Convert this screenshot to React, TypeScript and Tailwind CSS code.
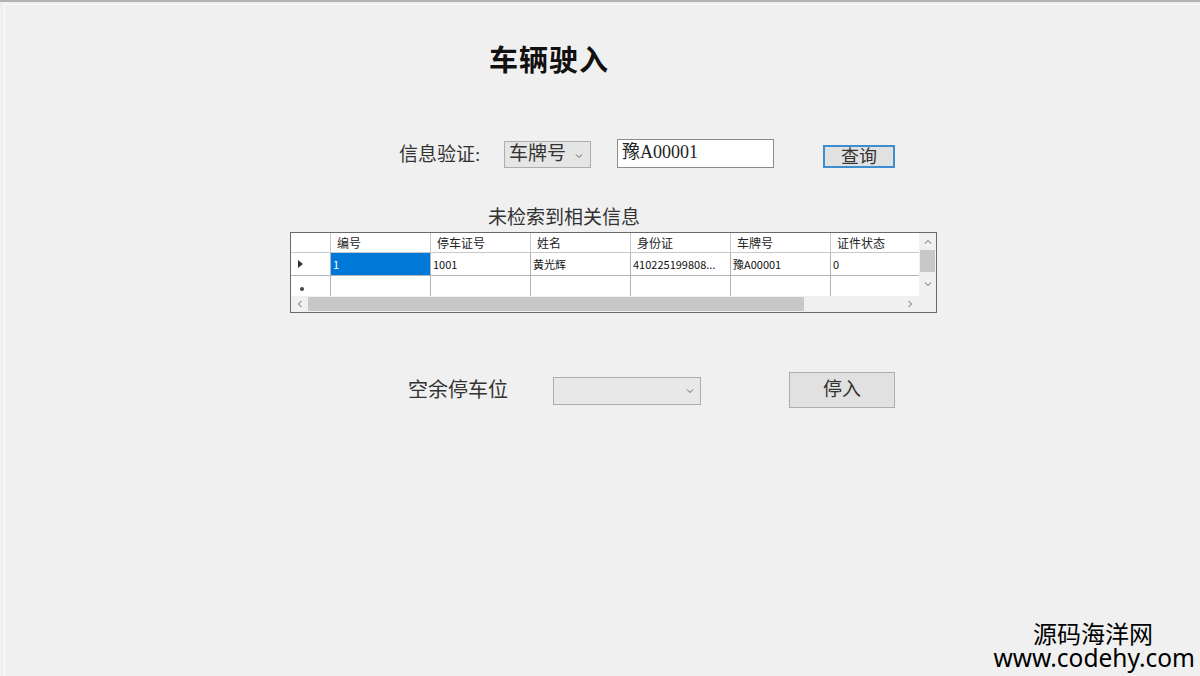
import React from 'react';

const cjk = { fontFamily: '"Liberation Serif", "Noto Sans CJK SC", serif' };
const sans = { fontFamily: '"Noto Sans CJK SC", "Liberation Sans", sans-serif' };

const columns = ['编号', '停车证号', '姓名', '身份证', '车牌号', '证件状态'];
const row = ['1', '1001', '黄光辉', '410225199808...', '豫A00001', '0'];

function Chevron({ className }: { className?: string }) {
  return (
    <svg viewBox="0 0 8 6" className={className}>
      <path d="M1 1.5 L4 4.5 L7 1.5" fill="none" stroke="#606060" strokeWidth="1" />
    </svg>
  );
}

function DataGrid() {
  return (
    <div className="ml-[289px] mt-[2px] w-[647px] h-[81px] border border-[#6a6a6a] bg-[#f0f0f0] flex flex-col" style={sans}>
      <div className="flex h-[63px]">
        <div className="w-[628px] overflow-hidden bg-white flex flex-col">
          {/* header */}
          <div className="flex h-[20px] border-b border-[#c8c8c8] shrink-0">
            <div className="w-[40px] shrink-0 border-r border-[#c8c8c8]" />
            {columns.map((c) => (
              <div key={c} className="w-[100px] shrink-0 border-r border-[#c8c8c8] pl-[6px] text-[12px] leading-[19px] text-[#222]">
                {c}
              </div>
            ))}
          </div>
          {/* data row */}
          <div className="flex h-[23px] border-b border-[#b4b4b4] shrink-0">
            <div className="w-[40px] shrink-0 border-r border-[#b4b4b4] flex items-center pl-[7px]">
              <svg viewBox="0 0 5 8" className="w-[5px] h-[8px]">
                <path d="M0 0 L5 4 L0 8 Z" fill="#333" />
              </svg>
            </div>
            {row.map((v, i) => (
              <div
                key={i}
                className={
                  i === 0
                    ? 'w-[100px] shrink-0 border-r border-[#b4b4b4] pl-[2px] text-[11px] leading-[22px] bg-[#0078d7] text-white'
                    : 'w-[100px] shrink-0 border-r border-[#b4b4b4] pl-[2px] text-[11px] leading-[22px] text-[#111]'
                }
              >
                {v}
              </div>
            ))}
          </div>
          {/* new row */}
          <div className="flex h-[20px] shrink-0">
            <div className="w-[40px] shrink-0 border-r border-[#b4b4b4] flex items-center pl-[9px] pt-[5px]">
              <div className="w-[4px] h-[4px] rounded-full bg-[#444]" />
            </div>
            {row.map((_, i) => (
              <div key={i} className="w-[100px] shrink-0 border-r border-[#b4b4b4]" />
            ))}
          </div>
        </div>
        {/* vertical scrollbar */}
        <div className="w-[17px] bg-[#f0f0f0] flex flex-col items-center">
          <div className="h-[17px] flex items-center justify-center">
            <Chevron className="w-[8px] h-[6px] rotate-180" />
          </div>
          <div className="w-[15px] h-[22px] bg-[#c8c8c8]" />
          <div className="flex-1 flex items-center justify-center">
            <Chevron className="w-[8px] h-[6px]" />
          </div>
        </div>
      </div>
      {/* horizontal scrollbar */}
      <div className="flex h-[16px]">
        <div className="w-[628px] flex items-center bg-[#f0f0f0]">
          <div className="w-[17px] flex items-center justify-center">
            <Chevron className="w-[8px] h-[6px] rotate-90" />
          </div>
          <div className="w-[496px] h-[14px] bg-[#c8c8c8]" />
          <div className="flex-1 flex items-center justify-end pr-[5px]">
            <Chevron className="w-[8px] h-[6px] -rotate-90" />
          </div>
        </div>
        <div className="w-[17px] bg-[#f0f0f0]" />
      </div>
    </div>
  );
}

export default function App() {
  return (
    <div className="w-[1200px] h-[676px] bg-[#f0f0f0] border-t-2 border-[#b4b4b4] overflow-hidden relative">
      <div className="border-t border-[#fafafa] mt-[2px] ml-[4px] h-full border-l">
        <h1 className="ml-[484px] mt-[33px] text-[29px] leading-[40px] font-bold text-[#111] tracking-[1px]" style={sans}>
          车辆驶入
        </h1>

        <div className="flex ml-[394px] mt-[61px] h-[30px]" style={cjk}>
          <div className="w-[105px] pt-[4px] text-[19px] leading-[24px] text-[#333]">信息验证:</div>
          <div className="w-[87px] h-[27px] mt-[2px] bg-[#e5e5e5] border border-[#adadad] flex items-center pl-[4px] text-[19px] text-[#333]">
            车牌号
            <Chevron className="w-[8px] h-[6px] ml-[9px] mt-[2px]" />
          </div>
          <div className="ml-[26px] w-[157px] h-[29px] bg-white border border-[#8c8c8c] pl-[4px] text-[18px] leading-[24px] text-[#222]">
            豫A00001
          </div>
          <button className="ml-[49px] mt-[6px] w-[72px] h-[23px] bg-[#e1e1e1] border-2 border-[#3d8ed0] text-[18px] leading-[18px] text-[#333]" style={cjk}>
            查询
          </button>
        </div>

        <div className="ml-[483px] mt-[37px] text-[19px] leading-[24px] text-[#333]" style={cjk}>
          未检索到相关信息
        </div>

        <div className="-ml-[4px]">
          <DataGrid />
        </div>

        <div className="flex ml-[398px] mt-[59px] h-[36px]" style={cjk}>
          <div className="w-[150px] pt-[6px] text-[20px] leading-[24px] text-[#333] pl-[5px]">空余停车位</div>
          <div className="w-[148px] h-[28px] mt-[5px] bg-[#e8e8e8] border border-[#adadad] flex items-center justify-end pr-[6px]">
            <Chevron className="w-[8px] h-[6px]" />
          </div>
          <button className="ml-[88px] w-[106px] h-[36px] bg-[#e1e1e1] border border-[#adadad] text-[19px] text-[#333]" style={cjk}>
            停入
          </button>
        </div>
      </div>

      <div className="absolute right-[5px] bottom-[7px] flex flex-col items-end" style={{ fontFamily: '"Noto Sans", "Noto Sans CJK SC", sans-serif' }}>
        <div className="mr-[42px] mb-[1px] text-[24px] leading-[24px] text-black" style={sans}>源码海洋网</div>
        <div className="text-[24.5px] leading-[23px] text-black">www.codehy.com</div>
      </div>
    </div>
  );
}
